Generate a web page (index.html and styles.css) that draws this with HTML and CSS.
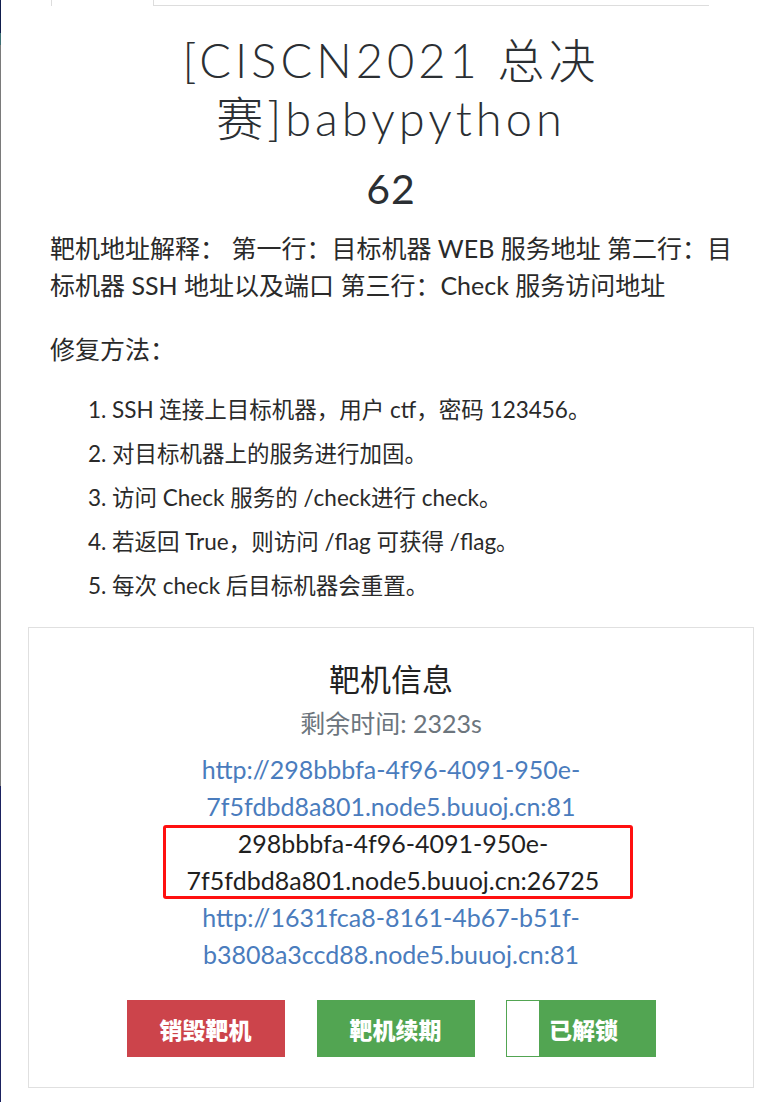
FILE: index.html
```html
<!DOCTYPE html>
<html lang="zh">
<head>
<meta charset="utf-8">
<title>babypython</title>
<link rel="stylesheet" href="styles.css">
</head>
<body>
<div class="edge"></div>
<nav class="tabs">
  <div class="tab tab-active"></div>
  <div class="tab tab-rest"></div>
</nav>
<main class="main">
  <h1 class="title">[CISCN2021 总决赛]babypython</h1>
  <div class="score">62</div>
  <div class="desc">
    <p class="para">靶机地址解释： 第一行：目标机器 WEB 服务地址 第二行：目标机器 SSH 地址以及端口 第三行：Check 服务访问地址</p>
    <p class="para para-2">修复方法：</p>
    <ol class="steps">
      <li>SSH 连接上目标机器，用户 ctf，密码 123456。</li>
      <li>对目标机器上的服务进行加固。</li>
      <li>访问 Check 服务的 /check进行 check。</li>
      <li>若返回 True，则访问 /flag 可获得 /flag。</li>
      <li>每次 check 后目标机器会重置。</li>
    </ol>
  </div>
  <section class="card">
    <h2 class="card-title">靶机信息</h2>
    <div class="remain">剩余时间: 2323s</div>
    <div class="addr"><a class="link" href="#">http://298bbbfa-4f96-4091-950e-7f5fdbd8a801.node5.buuoj.cn:81</a></div>
    <div class="ssh"><span class="ssh-text">298bbbfa-4f96-4091-950e-7f5fdbd8a801.node5.buuoj.cn:26725</span></div>
    <div class="addr"><a class="link" href="#">http://1631fca8-8161-4b67-b51f-b3808a3ccd88.node5.buuoj.cn:81</a></div>
    <div class="actions">
      <button class="btn btn-red">销毁靶机</button>
      <button class="btn btn-green">靶机续期</button>
      <button class="btn btn-unlock"><span class="unlock-gap"></span><span class="unlock-label">已解锁</span></button>
    </div>
  </section>
</main>
</body>
</html>
```

FILE: styles.css
```css
* { box-sizing: border-box; }
html, body { margin: 0; padding: 0; background: #fff; }
body {
  font-family: Lato, "Noto Sans CJK SC", sans-serif;
  color: #222;
  height: 1102px;
  overflow: hidden;
}
.edge {
  position: fixed;
  left: 0;
  top: 0;
  width: 1px;
  height: 1102px;
  background: linear-gradient(to bottom, #0f1d4d 0, #0f1d4d 33px, #3c6f74 33px, #3c6f74 45px, #7a7a7a 45px, #7a7a7a 786px, #1b2260 786px, #1b2260 100%);
}
.tabs {
  display: flex;
  margin-left: 51px;
  height: 6px;
}
.tab { height: 6px; }
.tab-active { width: 102px; border-left: 1px solid #ddd; }
.tab-rest { width: 556px; border-left: 1px solid #ddd; border-bottom: 1px solid #ddd; }
.main {
  margin-left: 28px;
  width: 726px;
}
.title {
  margin: 25px auto 0;
  width: 450px;
  text-align: center;
  font-family: Lato, "Noto Sans CJK SC", sans-serif;
  font-weight: 300;
  font-size: 47px;
  line-height: 58px;
  letter-spacing: 4px;
  color: #2b2f33;
}
.score {
  text-align: center;
  font-size: 41px;
  line-height: 48px;
  font-weight: 400;
  letter-spacing: 1px;
  color: #2b2f33;
  margin-top: 18px;
}
.desc { padding: 0 14px 0 22px; margin-top: 17px; }
.para {
  margin: 0;
  font-size: 25px;
  line-height: 37px;
  color: #2a2a2a;
}
.para-2 { margin-top: 27px; }
.steps {
  margin: 20px 0 0;
  padding-left: 62px;
  font-size: 22.5px;
  line-height: 44px;
  color: #2a2a2a;
}
.card {
  margin-top: 19px;
  border: 1px solid #e0e0e0;
  height: 461px;
  text-align: center;
  padding-top: 30px;
}
.card-title {
  margin: 0 0 3px;
  font-weight: 400;
  font-size: 31px;
  line-height: 42px;
  color: #222;
}
.remain {
  font-size: 25px;
  line-height: 40px;
  color: #6c757d;
  margin-bottom: 8px;
}
.addr {
  width: 440px;
  margin: 0 auto;
  font-size: 25px;
  line-height: 37px;
}
.link { color: #4a7cbd; text-decoration: none; }
.ssh {
  width: 470px;
  margin-left: calc(50% - 228px);
  height: 74px;
  box-shadow: inset 0 0 0 3px #ff1010;
  border-radius: 3px;
  font-size: 25px;
  line-height: 37px;
  color: #1f1f1f;
  padding: 0 10px 0 0;
}
.ssh-text { display: block; }
.actions {
  display: flex;
  justify-content: center;
  gap: 32px;
  margin-top: 27px;
}
.btn {
  border: none;
  height: 57px;
  width: 158px;
  color: #fff;
  font-family: "Noto Sans CJK SC", sans-serif;
  font-weight: 900;
  font-size: 23px;
  padding: 0;
  cursor: pointer;
}
.btn-red { background: #cc444b; }
.btn-green { background: #52a552; }
.btn-unlock {
  width: 150px;
  margin-left: -1px;
  display: flex;
  background: #52a552;
  border: 1px solid #52a552;
}
.unlock-gap { width: 32px; height: 100%; background: #fff; }
.unlock-label { flex: 1; display: flex; align-items: center; justify-content: center; padding-right: 26px; }
.btn-red, .btn-green { display: flex; align-items: center; justify-content: center; }
```
